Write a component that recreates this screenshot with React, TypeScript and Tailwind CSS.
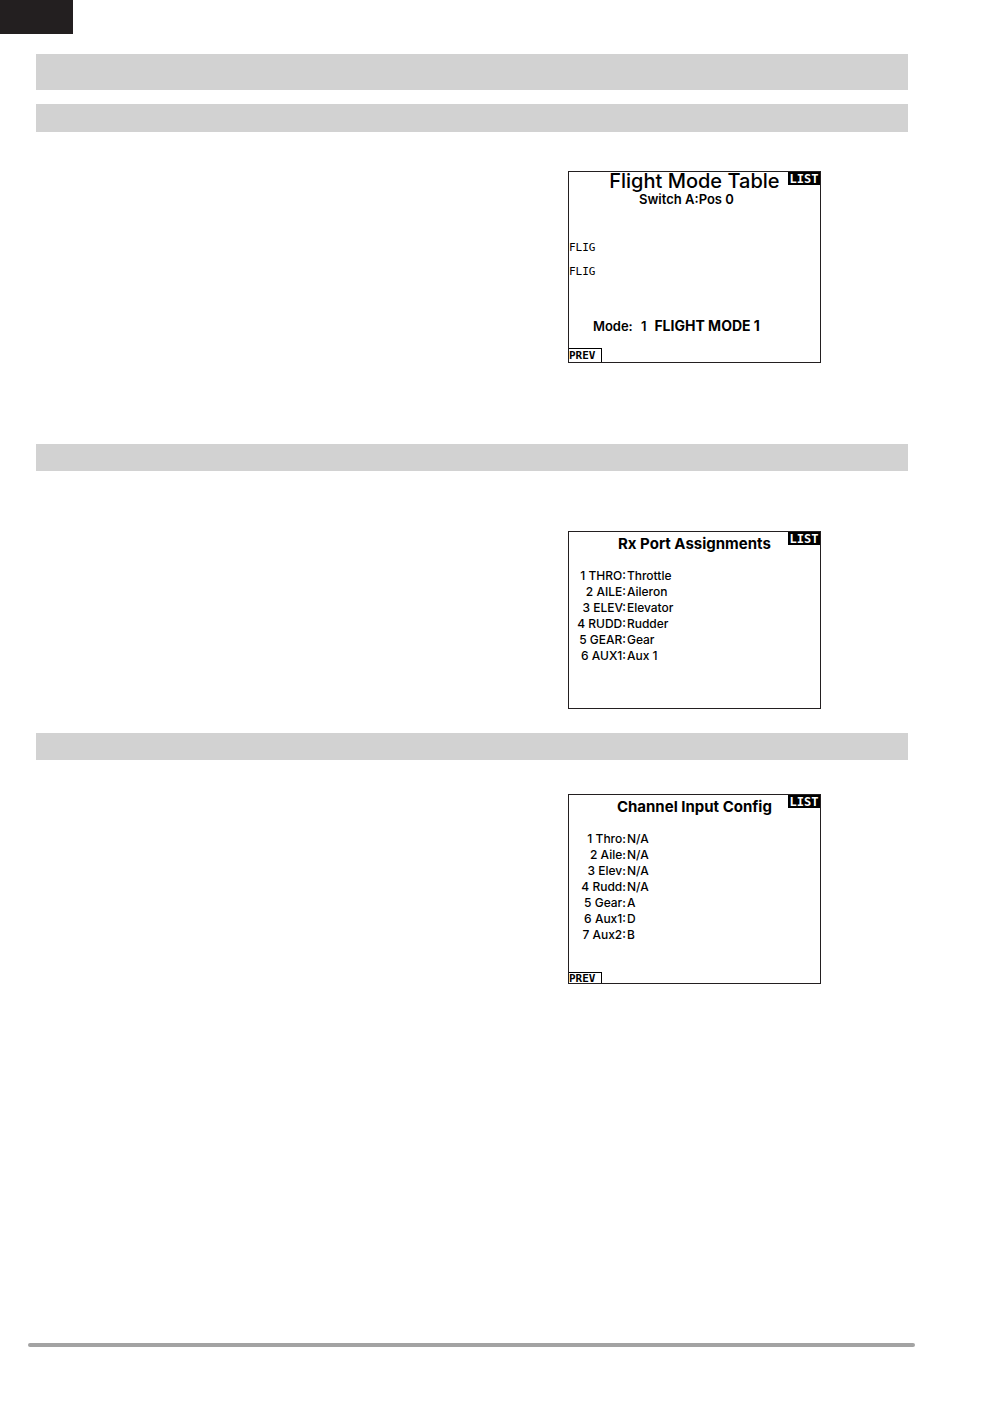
import React from 'react';

type Row = { port: string; label: string; value: string };

const rxPorts: Row[] = [
  { port: '1', label: 'THRO:', value: 'Throttle' },
  { port: '2', label: 'AILE:', value: 'Aileron' },
  { port: '3', label: 'ELEV:', value: 'Elevator' },
  { port: '4', label: 'RUDD:', value: 'Rudder' },
  { port: '5', label: 'GEAR:', value: 'Gear' },
  { port: '6', label: 'AUX1:', value: 'Aux 1' },
];

const channelInputs: Row[] = [
  { port: '1', label: 'Thro:', value: 'N/A' },
  { port: '2', label: 'Aile:', value: 'N/A' },
  { port: '3', label: 'Elev:', value: 'N/A' },
  { port: '4', label: 'Rudd:', value: 'N/A' },
  { port: '5', label: 'Gear:', value: 'A' },
  { port: '6', label: 'Aux1:', value: 'D' },
  { port: '7', label: 'Aux2:', value: 'B' },
];

const Bar = ({ className }: { className: string }) => <div className={`bg-[#d2d2d2] ${className}`} />;

const Screen = ({ className, prev, children }: { className: string; prev?: string; children: React.ReactNode }) => (
  <section className={`relative ml-[61%] w-[253px] border border-[#231f20] ${className}`}>
    {children}
    <button className="absolute top-0 right-0 h-[13px] w-8 bg-black font-['DejaVu_Sans_Mono',monospace] text-xs leading-3 font-bold text-white">
      LIST
    </button>
    {prev && (
      <button
        className={`absolute bottom-0 left-0 w-[33px] border-t border-r border-black text-left font-['DejaVu_Sans_Mono',monospace] text-[11px] font-bold ${prev}`}
      >
        PREV
      </button>
    )}
  </section>
);

const RowTable = ({ rows }: { rows: Row[] }) => (
  <table className="mt-4 text-xs leading-4 font-medium">
    <tbody>
      {rows.map(row => (
        <tr key={row.port}>
          <th scope="row" className="w-[57px] p-0 text-right font-medium whitespace-nowrap">
            {row.port} {row.label}
          </th>
          <td className="py-0 pr-0 pl-px">{row.value}</td>
        </tr>
      ))}
    </tbody>
  </table>
);

export default function App() {
  return (
    <div className="bg-white font-['Inter',sans-serif] text-black">
      <div className="h-[34px] w-[73px] bg-[#231f20]" />
      <main className="mt-5 mr-[90px] ml-9">
        <Bar className="h-9" />
        <Bar className="mt-[14px] h-7" />
        <Screen className="mt-[39px] h-48" prev="h-[14px] leading-[14px]">
          <h2 className="text-center text-xl leading-[18px] font-medium">Flight Mode Table</h2>
          <p className="pr-4 text-center text-[13px] leading-[18px] font-semibold">Switch A:Pos 0</p>
          <ul className="mt-7 font-['DejaVu_Sans_Mono',monospace] text-[11px] leading-6">
            <li>FLIG</li>
            <li>FLIG</li>
          </ul>
          <p className="mt-[34px] ml-6 flex gap-2 text-[13px] leading-4 font-semibold">
            <span className="w-10">Mode:</span>
            <span>1</span>
            <b className="text-sm leading-4 font-bold">FLIGHT MODE 1</b>
          </p>
        </Screen>

        <Bar className="mt-[81px] h-[27px]" />
        <Screen className="mt-[60px] h-[178px]">
          <h2 className="mt-1 text-center text-[15px] leading-4 font-bold">Rx Port Assignments</h2>
          <RowTable rows={rxPorts} />
        </Screen>

        <Bar className="mt-6 h-[27px]" />
        <Screen className="mt-[34px] h-[190px]" prev="h-[11px] leading-[12px]">
          <h2 className="mt-1 text-center text-[15px] leading-4 font-bold">Channel Input Config</h2>
          <RowTable rows={channelInputs} />
        </Screen>
      </main>
      <footer className="mt-[359px] mr-[83px] mb-[70px] ml-7 h-1 rounded-full bg-[#a3a3a3]" />
    </div>
  );
}
